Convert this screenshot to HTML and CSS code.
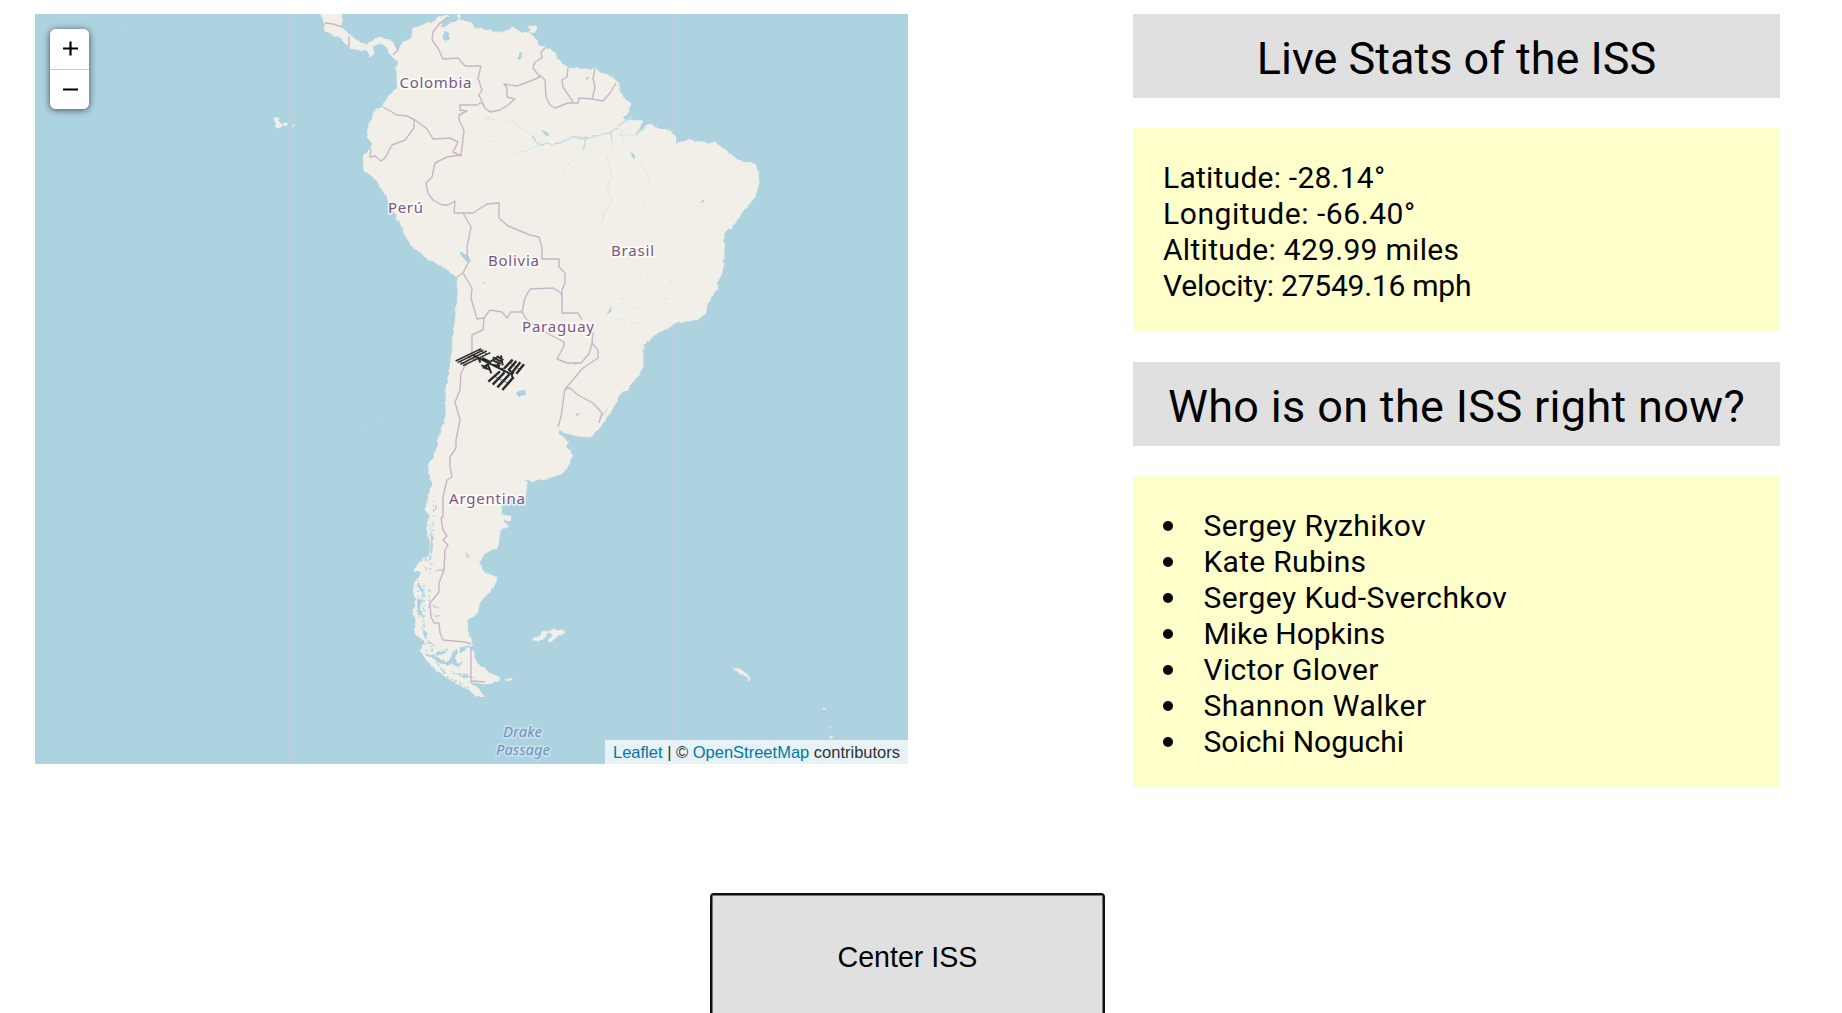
FILE: index.html
```
<!DOCTYPE html>
<html lang="en">
<head>
<meta charset="utf-8">
<title>ISS Tracker</title>
<link rel="stylesheet" href="styles.css">
</head>
<body>
<main class="layout">
  <section class="map">
    <svg class="map-canvas" viewBox="35 14 873 750" width="873" height="750" role="img" aria-label="Map of South America">
      <defs>
        <filter id="coast" filterUnits="userSpaceOnUse" x="35" y="10" width="873" height="754">
          <feTurbulence type="fractalNoise" baseFrequency=".16" numOctaves="2" seed="4"/>
          <feDisplacementMap in="SourceGraphic" scale="4" xChannelSelector="R" yChannelSelector="G"/>
          <feGaussianBlur stdDeviation=".45"/>
        </filter>
      </defs>
      <g class="seams"><path d="M288.5 14V764M672.5 14V764"/></g>
      <g filter="url(#coast)">
      <g class="land">
        <path d="M316 10L325 23L325 32L333 34L342 39L350 47L358 50L367 51L370 56L373 54L373 47L380 43L387 47L390 55L397 60L397 87L388 97L382 107L373 113L368 127L367 137L373 143L370 150L363 157L364 170L372 176L379 184L388 200L395 214L400 223L406 237L413 248L425 257L440 265L450 271L457 278L458 293L455 323L452 350L450 367L446 387L446 417L440 437L433 458L428 463L430 475L432 485L427 502L426 510L430 516L427 530L431 545L428 556L420 562L413 571L422 572L415 582L413 590L416 600L413 613L416 620L415 633L424 641L420 652L428 660L433 668L445 676L457 685L465 687L475 695L484 697L478 688L466 681L485 684L500 680L499 677L487 672L477 663L472 650L466 646L472 645L468 633L467 620L477 613L480 602L494 587L496 577L485 573L479 563L485 553L498 547L500 530L508 526L502 519L509 521L512 515L502 515L501 506L505 499L525 497L527 485L523 478L527 481L547 479L565 472L573 455L567 448L568 442L558 433L558 429L567 433L577 436L590 437L600 427L610 412L625 397L630 385L641 373L643 363L643 345L657 333L668 328L677 322L697 320L706 313L707 303L718 289L717 283L722 273L724 257L724 232L732 228L742 212L755 197L759 183L758 173L754 163L740 162L727 151L715 143L703 143L687 139L676 144L676 137L672 132L648 124L640 133L634 138L638 130L643 121L625 120L622 117L628 112L631 105L623 97L618 83L607 75L595 69L580 69L568 68L558 60L555 53L547 47L538 46L537 39L530 34L522 33L513 28L503 32L493 32L482 28L475 30L472 23L460 20L448 25L440 28L442 22L449 16L445 15L438 17L432 23L423 25L413 28L412 37L402 44L398 51L395 44L388 39L378 37L367 44L360 43L350 35L341 27L342 10Z"/>
        <path d="M457 16l2-2 2 3-2 2zM528 27l8-1-1 6-6 1 2-4z"/>
        <path d="M274 118l4-1 1 3 2 2 1 4-5 2-2-2 2-2-2-2zM283 124l4-1 1 1-4 2zM291 127l3-3v2z"/>
        <path d="M534 638l5-1 3-5 5-2 2 1-3 4-7 7-4-1zM549 632l6-3 2 2 7-1-1 4-7 3-5 5-3-1 4-6zM505 680l8-2 0 1-7 2"/>
        <path d="M733 668q10 0 17 11l-1 2q-4-7-16-13"/>
        <circle cx="825" cy="709" r=".8"/><circle cx="831" cy="727" r=".8"/><circle cx="831" cy="737" r="1.1"/>
        <path class="faint" d="M124 30h1M366 425h2M383 424h1"/>
      </g>
      <g class="water">
        <path d="M444 31l5 2 1 6-5 2-3-5zM519 53l4-1-1 7-4 1 1-4zM459 253l5-1 5 6 1 4-4-1zM515 393l10-4 1 7-7 1zM483 282l3 0-1 2zM541 130l6 2 3 3-4 1zM585 77l3 0 0 3-2 0zM631 152l3 2 2 5-4-2zM612 410l9-6 7-12-7-1-2 5zM602 417l6-8-5 4-4 5zM573 363l6-1-3 3zM696 203l12-4-7 4zM726 195l5 2zM575 414l6-1-4 3zM605 315l8-9-1 5z"/>
        <!-- Fjords and channels of southern Chile -->
        <path d="M430 520l3 26-5 20 3-22zM436 504l1 3-3 7zM434 571l14-4-6 3-7 2zM433 605l9 4-8-2zM434 614l8 2-7 1zM437 652l12-4-8 7-5 1zM449 658l8-10-1 12 4 9-8-5-7 2zM461 647l8-1-5 5-5 1zM424 652l16 6 8 8-12-5zM456 663l8-2-4 4zM442 660l6 4 1 3-5-3zM451 670l10 5 9 3-10-1zM417 600l7-2-3 10 3 12-6-8zM418 584l6 6-2 8zM421 629l7 4-3 5zM429 640l6 7-5-3zM420 640l7 5-5-1zM462 673l14 4-12 0z"/>
        <path d="M465 553l5 3-3 1zM466 444l2 2zM469 475l2 1zM480 472h3zM438 494h2zM448 598l2 1zM466 485l2 1z"/>
      </g>
      <path class="fjord-mesh" d="M426 520v44M421 560l7 12M418 575v45M424 585v50M429 590v20M421 628l14 28M426 650l16 20M437 664l18 20M447 676l22 12M434 500l-1 40M432 548l-2 26"/>
      <g class="river">
        <path class="main-river" d="M631 117L612 131L590 138L572 137L560 143L540 145L532 136M587 137L583 150M610 132L613 143"/>
        <path d="M532 136L513 122L483 118M540 145L515 155M583 150L568 165L558 178M613 145L607 157L612 177L607 187L612 200L603 215L601 226M637 162L645 170L650 182M644 203v8M625 145L618 124L632 118M617 135L632 135L641 130M626 282l6-4M637 278h4M619 298l5 2M631 305l7 4M670 280v4M661 300l7-1M618 318l5 2M632 323h8M640 243l4-3M488 140l5 1"/>
        <path d="M592 350L592 338M563 390L561 403M539 411l1-4M475 287l2 3"/>
      </g>
      </g>
      <g class="borders">
        <path d="M325 23L333 24L342 27M349 36V48M395 44L398 50L393 55"/>
        <path d="M448 17L440 23L433 32L432 40L438 48L443 59L458 58L465 66L481 66L478 78L482 90L479 95L485 108L490 112L500 110L508 105L515 99L507 97L507 88L504 84L517 86L533 80L540 77L533 68L535 62L542 58L541 52L546 47"/>
        <path d="M540 75L545 80L546 97L550 105L555 108L568 103L578 103L579 98L592 99L603 101L610 93L616 83M568 68L567 77L562 80L563 87L573 102M595 69L593 78L595 88L592 99"/>
        <path d="M484 107L482 102L477 105H460V110L467 111L459 115V120L464 130L462 147L461 156L453 152L458 142L450 138L433 139L427 129L415 120L407 116L397 115L383 107"/>
        <path d="M414 120V128L405 140L392 145L385 158L381 161L375 156L370 157L371 149"/>
        <path d="M461 155L447 157L435 163L432 177L426 183L428 193L433 200L442 205H448L455 201L454 213H473L487 204L499 203V218L508 226L530 235L539 237L542 248V259L559 259V267L565 273V283L562 290L562 313L578 313L582 320"/>
        <path d="M463 213L471 227L467 247L468 263L463 273L457 277M463 273L472 288L471 298L477 319L484 318L483 330L472 335L472 353L461 373L460 390L455 402L460 420L456 440V448L450 457V467L452 477L447 480L443 497V517L441 518L443 530L447 536L443 540L448 545L445 550L444 570L439 583V592L430 603L431 617L434 623H439L440 633L443 640L465 642L471 644M471 649V681L485 682"/>
        <path d="M484 318L490 310L502 312L507 318L511 312H522L525 298L530 289L553 288L561 293L562 297M522 312L527 320L547 333L564 342V346L557 359L567 363H581L589 354L592 343L593 332"/>
        <path d="M592 343L598 350V358L583 368L565 389L561 417L558 427M565 389L570 388L578 395L593 403L602 413L599 423"/>
      </g>
      <g class="country">
        <text x="399.5" y="88" textLength="72">Colombia</text>
        <text x="388" y="213" textLength="35">Perú</text>
        <text x="488" y="266" textLength="51">Bolivia</text>
        <text x="611" y="256" textLength="43">Brasil</text>
        <text x="522" y="332" textLength="72">Paraguay</text>
        <text x="449" y="504" textLength="76">Argentina</text>
      </g>
      <g class="sea">
        <text x="503" y="737" textLength="39">Drake</text>
        <text x="496" y="755" textLength="54">Passage</text>
      </g>
      <!-- Space station marker -->
      <g class="station" transform="translate(440 330) scale(.33333)">
        <path class="cells" d="M47 93L124 56M53 98L130 60M61 103L140 63M69 107L151 68"/>
        <path class="cells wide" d="M218 89L192 116M229 93L205 121M241 97L217 127M252 103L229 131M180 124L145 155M193 128L158 164M208 133L172 172M221 141L187 180"/>
        <path class="rib" d="M58 94L80 106M84 79L107 92M98 72L108 90M116 60L142 73M208 96L240 120M163 139L205 160"/>
        <path class="truss" d="M100 76L216 134M115 82L121 98M127 84L150 96M137 88L134 96M150 96L136 108M124 106L142 112M128 112L148 118M142 100L154 130M156 104L180 108M150 96L176 78M158 82L186 96M172 80L190 90M183 76L188 106M160 92L182 102M178 114L196 126M188 114V122M206 120L222 130M215 128L217 142M176 98L170 110"/>
      </g>
    </svg>
    <div class="zoom">
      <button class="zoom-button" type="button" aria-label="Zoom in"><svg width="15" height="15" viewBox="0 0 15 15"><path d="M0 7.5H15M7.5 .5V14.5"/></svg></button>
      <button class="zoom-button" type="button" aria-label="Zoom out"><svg width="15" height="15" viewBox="0 0 15 15"><path d="M0 7.5H15"/></svg></button>
    </div>
    <div class="attribution"><a href="#">Leaflet</a> | © <a href="#">OpenStreetMap</a> contributors</div>
  </section>
  <section class="info">
    <h2 class="heading">Live Stats of the ISS</h2>
    <div class="panel stats">
      <div class="latitude">Latitude: -28.14°</div>
      <div class="longitude">Longitude: -66.40°</div>
      <div class="altitude">Altitude: 429.99 miles</div>
      <div class="velocity">Velocity: 27549.16 mph</div>
    </div>
    <h2 class="heading crew-heading">Who is on the ISS right now?</h2>
    <ul class="panel crew">
      <li class="wide-name">Sergey Ryzhikov</li>
      <li class="medium-name">Kate Rubins</li>
      <li class="wide-name">Sergey Kud-Sverchkov</li>
      <li>Mike Hopkins</li>
      <li class="medium-name">Victor Glover</li>
      <li class="widest-name">Shannon Walker</li>
      <li>Soichi Noguchi</li>
    </ul>
  </section>
</main>
<div class="actions"><button class="center-button" type="button">Center ISS</button></div>
</body>
</html>
```
FILE: styles.css
```
* { box-sizing: border-box; }

html, body { height: 100%; }

body {
  margin: 0;
  overflow: hidden;
  background: #fff;
  color: #000;
  font-family: Roboto, sans-serif;
  font-size: 30px;
  line-height: 36px;
}

.layout {
  display: flex;
  justify-content: space-between;
  height: 893px;
  padding: 14px 62px 0 35px;
}

.map {
  position: relative;
  width: 873px;
  height: 750px;
  overflow: hidden;
  background: #add2e0;
}

.map-canvas { display: block; }

.land { fill: #f2efe9; stroke: #f2efe9; stroke-width: .8; stroke-linejoin: round; color-interpolation-filters: sRGB; }
.land .faint { stroke: #bddbdd; stroke-width: 1; }
.water { fill: #add2e0; }
.fjord-mesh { fill: none; stroke: #add2e0; stroke-width: 1.4; stroke-dasharray: 2 3 1 2 4 3; }
#coast { color-interpolation-filters: sRGB; }
.river { fill: none; stroke: #dae7e7; stroke-width: 1; stroke-linejoin: round; }
.river .main-river { stroke: #bcdbe3; stroke-width: 1.3; }
.borders { fill: none; stroke: #c9b5c8; stroke-width: 1.4; stroke-linejoin: round; }
.seams { fill: none; stroke: #c4ccda; stroke-width: 1; opacity: .8; }

.country text, .sea text {
  font-family: "Noto Sans", sans-serif;
  font-size: 15px;
  paint-order: stroke;
  stroke-width: 3.5px;
  stroke-linejoin: round;
}
.country text { font-weight: 400; fill: #7a5680; stroke: rgba(255, 255, 255, .7); }
.sea text { font-style: italic; fill: #7394c6; stroke: rgba(255, 255, 255, .3); }

.station { fill: none; stroke: #2b2b2b; }
.station .cells { stroke-width: 4.4; }
.station .wide { stroke-width: 7.4; }
.station .rib { stroke-width: 2; }
.station .truss { stroke-width: 6; }

.zoom {
  position: absolute;
  top: 15px;
  left: 15px;
  display: flex;
  flex-direction: column;
  width: 39px;
  height: 80px;
  overflow: hidden;
  border-radius: 6px;
  background: #fff;
  box-shadow: 0 1px 7px rgba(0, 0, 0, .65);
}

.zoom-button {
  display: flex;
  flex: 1;
  align-items: center;
  justify-content: center;
  padding: 0 0 0 2px;
  border: 0;
  background: #fff;
}
.zoom-button + .zoom-button { border-top: 1px solid #ccc; }
.zoom-button path { stroke: #000; stroke-width: 2.2; }

.attribution {
  position: absolute;
  right: 0;
  bottom: 0;
  width: 303px;
  height: 24px;
  padding-left: 8px;
  background: rgba(255, 255, 255, .7);
  color: #333;
  font: 16.5px/25px "Liberation Sans", Arial, sans-serif;
  white-space: nowrap;
}
.attribution a { color: #0078a8; text-decoration: none; }

.info {
  display: flex;
  flex-direction: column;
  gap: 30px;
  width: 647px;
}

.heading {
  margin: 0;
  padding: 18px 0 12px;
  background: #e0e0e0;
  font-size: 45px;
  font-weight: 400;
  line-height: 54px;
  text-align: center;
}
.crew-heading { letter-spacing: .34px; }

.panel {
  margin: 0;
  padding: 32px 30px 28px;
  background: #ffffcb;
}

.latitude { letter-spacing: .24px; }
.longitude { letter-spacing: .56px; }
.altitude { letter-spacing: .29px; }
.velocity { letter-spacing: -.24px; }

.crew { list-style: none; }
.crew li { display: flex; align-items: center; }
.crew li::before {
  content: "";
  width: 10px;
  height: 10px;
  margin-right: 30.5px;
  border-radius: 50%;
  background: #000;
}
.medium-name { letter-spacing: .3px; }
.wide-name { letter-spacing: .45px; }
.widest-name { letter-spacing: .54px; }

.actions { display: flex; justify-content: center; padding-right: 27px; }

.center-button {
  width: 395px;
  height: 128px;
  flex: none;
  border: 2px solid #101010;
  border-radius: 4px;
  background: #e0e0e0;
  box-shadow: inset 0 0 0 1px #767676;
  color: #000;
  font: 28.6px "Liberation Sans", Arial, sans-serif;
}
```
